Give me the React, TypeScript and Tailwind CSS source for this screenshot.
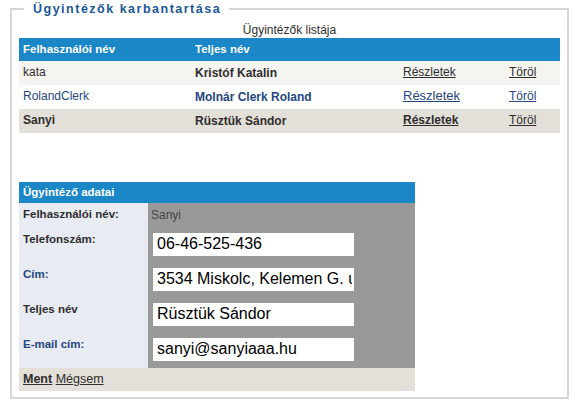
import React from "react";

const rows = [
  { user: "kata", name: "Kristóf Katalin", bg: "bg-[#f5f4f0]", tone: "text-[#2e2e2e]", userBold: false, detailsBold: false, detailsSize: "text-[12px]" },
  { user: "RolandClerk", name: "Molnár Clerk Roland", bg: "bg-white", tone: "text-[#25467e]", userBold: false, detailsBold: false, detailsSize: "text-[13px]" },
  { user: "Sanyi", name: "Rüsztük Sándor", bg: "bg-[#e3dfd9]", tone: "text-[#2e2e2e]", userBold: true, detailsBold: true, detailsSize: "text-[12px]" },
];

const fields = [
  { label: "Telefonszám:", value: "06-46-525-436", blue: false },
  { label: "Cím:", value: "3534 Miskolc, Kelemen G. utca 12.", blue: true },
  { label: "Teljes név", value: "Rüsztük Sándor", blue: false },
  { label: "E-mail cím:", value: "sanyi@sanyiaaa.hu", blue: true },
];

export default function App() {
  return (
    <div className="w-[578px] h-[408px] bg-white font-['Liberation_Sans',Arial,sans-serif] text-[#2e2e2e] pt-[1px]">
      <fieldset className="ml-[10px] w-[559px] border-2 border-[#d6d6d6] pl-[7px] pr-[7px] pb-[6px]">
        <legend className="ml-[5px] pl-[9px] pr-[8px] h-[16px] leading-[16px] text-[12.5px] font-bold tracking-[1.5px] text-[#1b5795]">
          Ügyintézők karbantartása
        </legend>
        <div className="mt-[6px] h-[15px] leading-[15px] text-center text-[12px] text-[#2e2e2e]">
          Ügyintézők listája
        </div>
        <table className="w-[541px] table-fixed border-collapse text-[12px]">
          <colgroup>
            <col className="w-[172px]" />
            <col className="w-[208px]" />
            <col className="w-[106px]" />
            <col className="w-[55px]" />
          </colgroup>
          <thead>
            <tr className="h-[23px] bg-[#1b87c7] text-white text-left">
              <th className="pl-[4px] font-bold text-[11.5px]">Felhasználói név</th>
              <th className="pl-[4px] font-bold text-[11.5px]">Teljes név</th>
              <th />
              <th />
            </tr>
          </thead>
          <tbody>
            {rows.map((r) => (
              <tr key={r.user} className={`h-[24px] ${r.bg} ${r.tone}`}>
                <td className={`pl-[4px] pb-[3px] ${r.userBold ? "font-bold" : ""}`}>{r.user}</td>
                <td className="pl-[4px] font-bold">{r.name}</td>
                <td className="pl-[4px] pb-[2px]">
                  <a href="#" className={`underline ${r.detailsSize} ${r.detailsBold ? "font-bold" : ""}`}>Részletek</a>
                </td>
                <td className="pl-[4px] pb-[2px]">
                  <a href="#" className="underline text-[12px]">Töröl</a>
                </td>
              </tr>
            ))}
          </tbody>
        </table>

        <div className="mt-[49px] w-[396px]">
          <div className="h-[21px] leading-[21px] bg-[#1b87c7] text-white font-bold text-[11.5px] pl-[4px]">
            Ügyintéző adatai
          </div>
          <div className="grid grid-cols-[129px_267px]">
            <div className="h-[25px] bg-[#e8ecf2] pl-[4px] pt-[4px] leading-[14px] text-[11.5px] font-bold text-[#2e2e2e]">
              Felhasználói név:
            </div>
            <div className="h-[25px] bg-[#999999] pl-[3px] pt-[5px] leading-[14px] text-[12px] text-[#464646]">
              Sanyi
            </div>
            {fields.map((f) => (
              <React.Fragment key={f.label}>
                <div
                  className={`h-[35px] bg-[#e8ecf2] pl-[4px] pt-[4px] leading-[14px] text-[11.5px] font-bold ${
                    f.blue ? "text-[#25467e]" : "text-[#2e2e2e]"
                  }`}
                >
                  {f.label}
                </div>
                <div className="h-[35px] bg-[#999999] pt-[4px]">
                  <input
                    defaultValue={f.value}
                    className="ml-[5px] w-[201px] h-[23px] bg-white pl-[4px] pr-[2px] text-[16px] text-black outline-none font-['Liberation_Sans',Arial,sans-serif]"
                  />
                </div>
              </React.Fragment>
            ))}
          </div>
          <div className="h-[23px] leading-[23px] bg-[#e3dfd9] pl-[4px] text-[12.5px] text-[#2e2e2e]">
            <a href="#" className="underline font-bold">Ment</a>{" "}
            <a href="#" className="underline">Mégsem</a>
          </div>
        </div>
      </fieldset>
    </div>
  );
}
